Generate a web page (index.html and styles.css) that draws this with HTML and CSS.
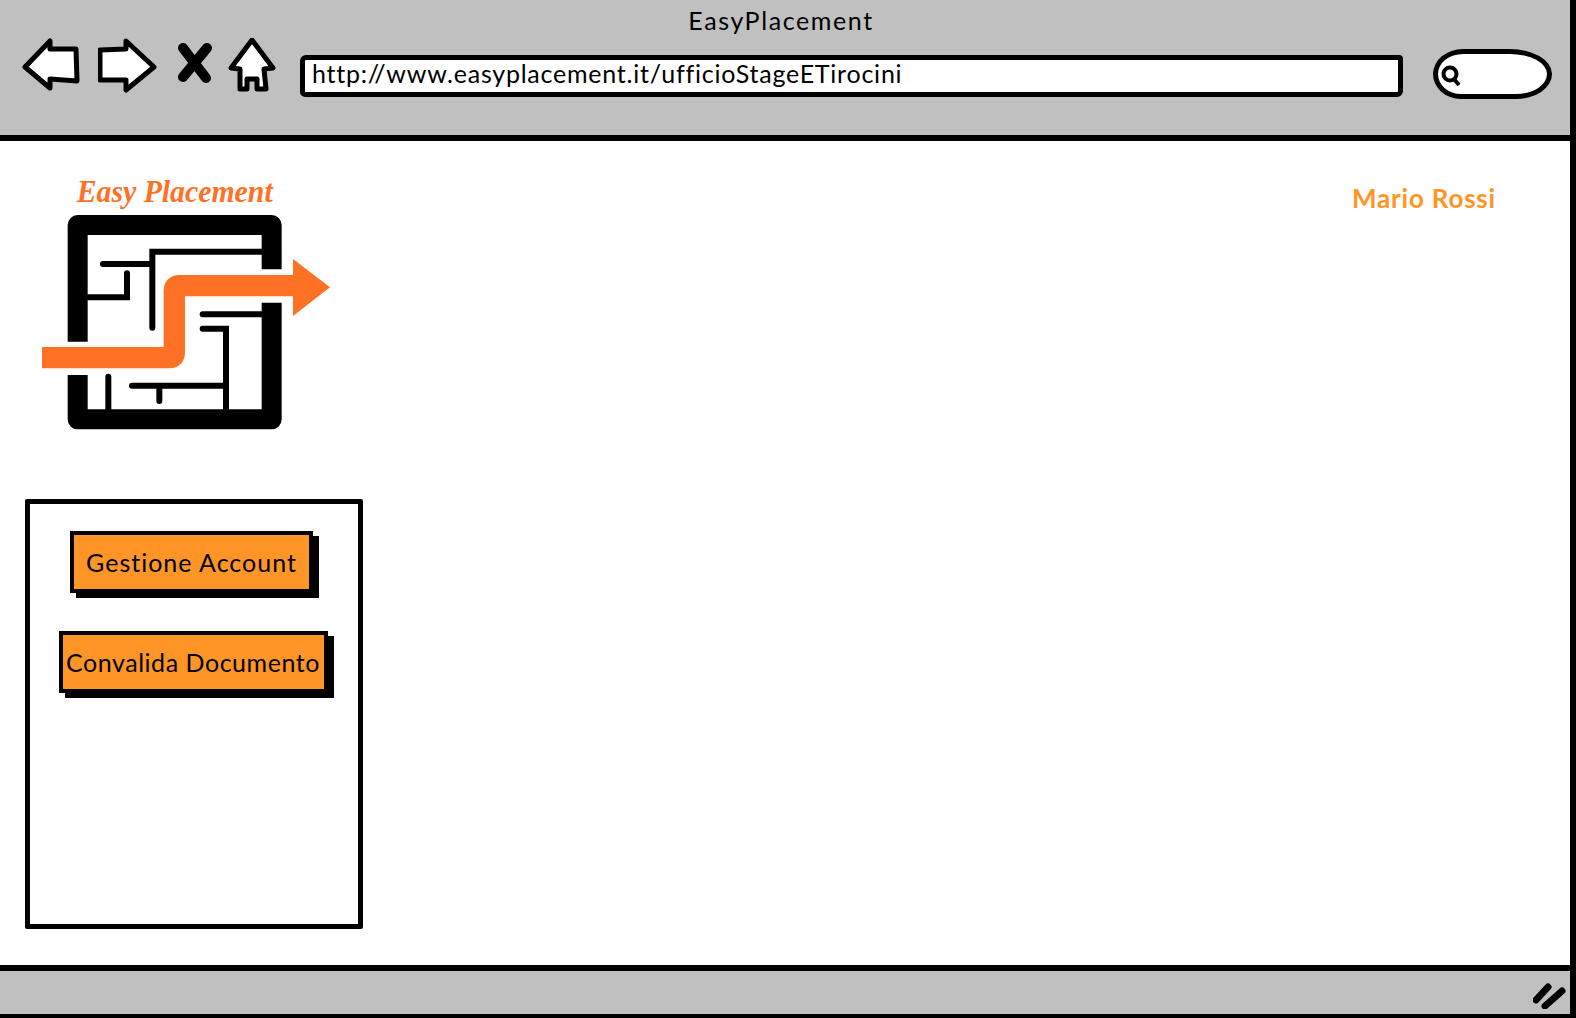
FILE: index.html
```html
<!doctype html>

<html>
    <head>
        <title>EasyPlacement</title>

        <link rel="stylesheet" href="styles.css">
    </head>

    <body>
        <div class="window">

            <header class="toolbar">
                <div class="title">EasyPlacement</div>

                <div class="nav">
                    <svg class="icon icon-back" viewBox="0 0 64 60">
                        <path class="shape" d="M3 29 L28 3 L28 11 L54 11 L55 43 L28 41 L28 50 Z"/>
                    </svg>
                    <svg class="icon icon-forward" viewBox="0 0 60 60">
                        <path class="shape" d="M2 12 L28 11 L28 3 L56 29 L28 52 L28 42 L2 42 Z"/>
                    </svg>
                    <svg class="icon icon-stop" viewBox="0 0 46 60">
                        <path class="cross" d="M13 10 L36 40 M37 10 L13 39"/>
                    </svg>
                    <svg class="icon icon-home" viewBox="0 0 60 60">
                        <path class="shape" d="M24 2 L45 30 L36 31 L38 51 L29 51 L29 41 L19 41 L19 51 L12 51 L12 31 L3 30 Z"/>
                    </svg>

                    <div class="url">http://www.easyplacement.it/ufficioStageETirocini</div>

                    <div class="search">
                        <svg class="search-icon" viewBox="0 0 24 24">
                            <circle cx="10" cy="10" r="6.5"/>
                            <path d="M14 15 L19 21"/>
                        </svg>
                    </div>
                </div>
            </header>

            <main class="content">
                <aside class="sidebar">
                    <svg class="logo" viewBox="0 0 960 810">
                        <text class="logo-text" x="140" y="96" textLength="588" lengthAdjust="spacingAndGlyphs">Easy Placement</text>

                        <!-- outer walls -->
                        <path class="wall" d="M143 515 L143 165 L725 165 L725 298"/>
                        <path class="wall" d="M725 398 L725 748 L143 748 L143 615"/>

                        <!-- inner lines -->
                        <path class="line" d="M695 245 L367 245 L367 473 M367 282 L219 282"/>
                        <path class="line" d="M175 382 L291 382 L291 310"/>
                        <path class="line" d="M695 433 L518 433"/>
                        <path class="line" d="M518 476 L588 476 L588 720"/>
                        <path class="line" d="M588 647 L306 647 M388 647 L388 693"/>
                        <path class="line" d="M235 620 L235 720"/>

                        <path class="arrow" d="M36 563 L418 563 Q433 563 433 548 L433 362 Q433 347 448 347 L800 347"/>
                        <path class="arrow-head" d="M789 267 L900 352 L789 438 Z"/>
                    </svg>

                    <nav class="panel">
                        <a class="btn btn-account">Gestione Account</a>
                        <a class="btn btn-docs">Convalida Documento</a>
                    </nav>
                </aside>

                <div class="user">Mario Rossi</div>
            </main>

            <footer class="statusbar">
                <svg class="grip" viewBox="0 0 34 26">
                    <path d="M3 17 L15 4 M12 23 L29 8"/>
                </svg>
            </footer>

        </div>
    </body>
</html>
```

FILE: styles.css
```css
* {box-sizing: border-box;}

body {
margin: 0;
background-color: white;
font-family: Lato, "Noto Sans", sans-serif;
color: black;
}

.window {
width: 1576px;
height: 1018px;
display: flex;
flex-direction: column;
border-right: 6px solid black;
overflow: hidden;
}

/* top bar */
.toolbar {
height: 141px;
background-color: #c0c0c0;
border-bottom: 6px solid black;
}

.title {
height: 38px;
padding-top: 4px;
text-align: center;
font-size: 25px;
line-height: 32px;
letter-spacing: 1.6px;
margin-left: -8px;
}

.nav {
display: flex;
align-items: center;
gap: 12px;
height: 60px;
padding-left: 22px;
}

.icon {height: 60px; flex: none;}
.icon-back {width: 64px;}
.icon-forward {width: 60px;}
.icon-stop {width: 46px;}
.icon-home {width: 60px;}

.shape {
fill: white;
stroke: black;
stroke-width: 5;
stroke-linejoin: round;
}

.cross {
fill: none;
stroke: black;
stroke-width: 10;
stroke-linecap: round;
}

.url {
width: 1103px;
height: 42px;
margin-top: 16px;
padding-left: 7px;
background-color: white;
border: 5px solid black;
border-radius: 6px 4px 6px 5px;
font-size: 25px;
line-height: 27px;
letter-spacing: 0.77px;
white-space: nowrap;
}

.search {
width: 119px;
height: 50px;
margin-left: 18px;
margin-top: 12px;
padding: 10px 0 0 2px;
background-color: white;
border: 5px solid black;
border-radius: 30px 42px 36px 28px / 25px;
}

.search-icon {
display: block;
width: 24px;
height: 24px;
fill: none;
stroke: black;
stroke-width: 4;
}

/* main area */
.content {
flex: 1;
display: flex;
justify-content: space-between;
}

.sidebar {padding-left: 25px;}

.logo {
display: block;
width: 320px;
height: 270px;
margin-top: 29px;
margin-left: 5px;
}

.logo-text {
font-family: "Liberation Serif", serif;
font-style: italic;
font-weight: bold;
font-size: 92px;
fill: #ff7124;
}

.wall {fill: none; stroke: black; stroke-width: 60; stroke-linejoin: round;}
.line {fill: none; stroke: black; stroke-width: 18; stroke-linecap: round;}
.arrow {fill: none; stroke: #ff7124; stroke-width: 64;}
.arrow-head {fill: #ff7124;}

.panel {
width: 338px;
height: 430px;
margin-top: 59px;
padding-top: 27px;
display: flex;
flex-direction: column;
align-items: center;
gap: 38px;
border: 5px solid black;
border-radius: 2px;
}

.btn {
height: 62px;
padding-top: 2px;
background-color: #ff9526;
border: 4px solid black;
box-shadow: 6px 5px 0 black;
text-align: center;
font-size: 25px;
line-height: 50px;
white-space: nowrap;
}

.btn-account {width: 243px; margin-right: 5px; letter-spacing: 1px;}
.btn-docs {width: 269px; margin-right: 2px; letter-spacing: 0.54px;}

.user {
padding: 40px 74px 0 0;
color: #ff9526;
font-size: 26px;
font-weight: bold;
line-height: 34px;
letter-spacing: 0.8px;
}

/* bottom bar */
.statusbar {
height: 53px;
display: flex;
justify-content: flex-end;
background-color: #c0c0c0;
border-top: 6px solid black;
border-bottom: 4px solid black;
}

.grip {
width: 34px;
height: 26px;
margin-top: 12px;
margin-right: 3px;
fill: none;
stroke: black;
stroke-width: 7;
stroke-linecap: round;
}
```
